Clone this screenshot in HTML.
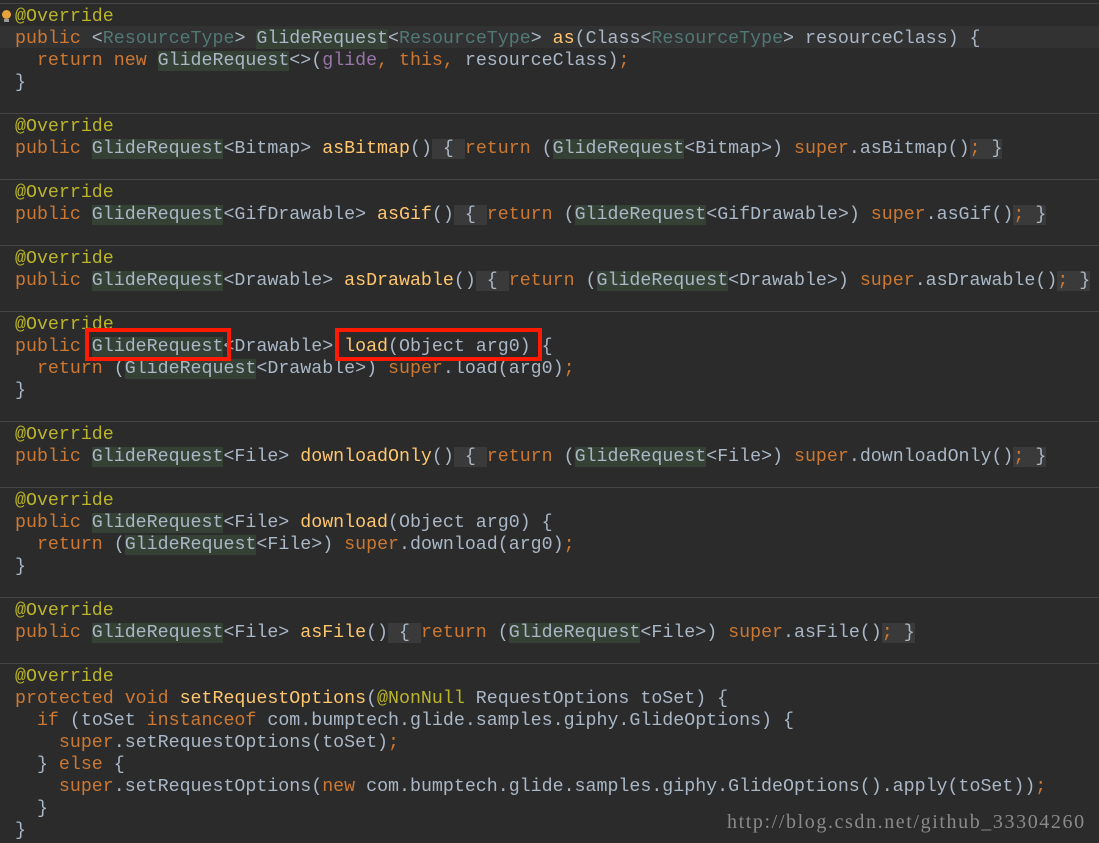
<!DOCTYPE html>
<html><head><meta charset="utf-8"><style>
body{margin:0;width:1099px;height:843px;background:#2b2b2b;overflow:hidden;position:relative;font-family:"Liberation Mono",monospace;font-size:18.3px;color:#a9b7c6}
.l{position:absolute;left:15px;height:22px;line-height:22px;white-space:pre;margin-top:2px}
.k{color:#cc7832}.a{color:#bbb529}.t{color:#507874}.m{color:#ffc66d}.f{color:#9876aa}
.h{background:#344134}.fo{background:#3a3a3a}
.sep{position:absolute;left:0;width:1099px;height:1px;background:#454545}
.box{position:absolute;border:4px solid #ff1a00;box-sizing:border-box}
.cur{position:absolute;left:0;width:1099px;top:26px;height:22px;background:#323232}
</style></head><body>
<div class="cur"></div>
<div class="sep" style="top:3px"></div>
<div class="sep" style="top:113px"></div>
<div class="sep" style="top:179px"></div>
<div class="sep" style="top:245px"></div>
<div class="sep" style="top:311px"></div>
<div class="sep" style="top:421px"></div>
<div class="sep" style="top:487px"></div>
<div class="sep" style="top:597px"></div>
<div class="sep" style="top:663px"></div>
<div style="position:absolute;left:2px;top:10px;width:9px;height:9px;border-radius:50%;background:#e8a33a"></div>
<div style="position:absolute;left:4px;top:19px;width:5px;height:3px;background:#999"></div>

<div class="l a" style="top:4px">@Override</div>
<div class="l" style="top:26px"><span class="k">public </span>&lt;<span class="t">ResourceType</span>&gt; <span class="h">GlideRequest</span>&lt;<span class="t">ResourceType</span>&gt; <span class="m">as</span>(Class&lt;<span class="t">ResourceType</span>&gt; resourceClass) {</div>
<div class="l" style="top:48px">  <span class="k">return new </span><span class="h">GlideRequest</span>&lt;&gt;(<span class="f">glide</span><span class="k">, this, </span>resourceClass)<span class="k">;</span></div>
<div class="l" style="top:70px">}</div>

<div class="l a" style="top:114px">@Override</div>
<div class="l" style="top:136px"><span class="k">public </span><span class="h">GlideRequest</span>&lt;Bitmap&gt; <span class="m">asBitmap</span>()<span class="fo"> { </span><span class="k">return </span>(<span class="h">GlideRequest</span>&lt;Bitmap&gt;) <span class="k">super</span>.asBitmap()<span class="fo"><span class="k">;</span> }</span></div>

<div class="l a" style="top:180px">@Override</div>
<div class="l" style="top:202px"><span class="k">public </span><span class="h">GlideRequest</span>&lt;GifDrawable&gt; <span class="m">asGif</span>()<span class="fo"> { </span><span class="k">return </span>(<span class="h">GlideRequest</span>&lt;GifDrawable&gt;) <span class="k">super</span>.asGif()<span class="fo"><span class="k">;</span> }</span></div>

<div class="l a" style="top:246px">@Override</div>
<div class="l" style="top:268px"><span class="k">public </span><span class="h">GlideRequest</span>&lt;Drawable&gt; <span class="m">asDrawable</span>()<span class="fo"> { </span><span class="k">return </span>(<span class="h">GlideRequest</span>&lt;Drawable&gt;) <span class="k">super</span>.asDrawable()<span class="fo"><span class="k">;</span> }</span></div>

<div class="l a" style="top:312px">@Override</div>
<div class="l" style="top:334px"><span class="k">public </span><span class="h">GlideRequest</span>&lt;Drawable&gt; <span class="m">load</span>(Object arg0) {</div>
<div class="l" style="top:356px">  <span class="k">return </span>(<span class="h">GlideRequest</span>&lt;Drawable&gt;) <span class="k">super</span>.load(arg0)<span class="k">;</span></div>
<div class="l" style="top:378px">}</div>
<div class="box" style="left:85px;top:328px;width:146px;height:33px"></div>
<div class="box" style="left:335px;top:328px;width:207px;height:33px"></div>

<div class="l a" style="top:422px">@Override</div>
<div class="l" style="top:444px"><span class="k">public </span><span class="h">GlideRequest</span>&lt;File&gt; <span class="m">downloadOnly</span>()<span class="fo"> { </span><span class="k">return </span>(<span class="h">GlideRequest</span>&lt;File&gt;) <span class="k">super</span>.downloadOnly()<span class="fo"><span class="k">;</span> }</span></div>

<div class="l a" style="top:488px">@Override</div>
<div class="l" style="top:510px"><span class="k">public </span><span class="h">GlideRequest</span>&lt;File&gt; <span class="m">download</span>(Object arg0) {</div>
<div class="l" style="top:532px">  <span class="k">return </span>(<span class="h">GlideRequest</span>&lt;File&gt;) <span class="k">super</span>.download(arg0)<span class="k">;</span></div>
<div class="l" style="top:554px">}</div>

<div class="l a" style="top:598px">@Override</div>
<div class="l" style="top:620px"><span class="k">public </span><span class="h">GlideRequest</span>&lt;File&gt; <span class="m">asFile</span>()<span class="fo"> { </span><span class="k">return </span>(<span class="h">GlideRequest</span>&lt;File&gt;) <span class="k">super</span>.asFile()<span class="fo"><span class="k">;</span> }</span></div>

<div class="l a" style="top:664px">@Override</div>
<div class="l" style="top:686px"><span class="k">protected void </span><span class="m">setRequestOptions</span>(<span class="a">@NonNull </span>RequestOptions toSet) {</div>
<div class="l" style="top:708px">  <span class="k">if </span>(toSet <span class="k">instanceof </span>com.bumptech.glide.samples.giphy.GlideOptions) {</div>
<div class="l" style="top:730px">    <span class="k">super</span>.setRequestOptions(toSet)<span class="k">;</span></div>
<div class="l" style="top:752px">  } <span class="k">else </span>{</div>
<div class="l" style="top:774px">    <span class="k">super</span>.setRequestOptions(<span class="k">new </span>com.bumptech.glide.samples.giphy.GlideOptions().apply(toSet))<span class="k">;</span></div>
<div class="l" style="top:796px">  }</div>
<div class="l" style="top:818px">}</div>
<div style="position:absolute;left:727px;top:811px;font-family:'Liberation Serif',serif;font-size:20px;letter-spacing:1.6px;color:#8a8a8a;white-space:pre">http://blog.csdn.net/github_33304260</div>
</body></html>
